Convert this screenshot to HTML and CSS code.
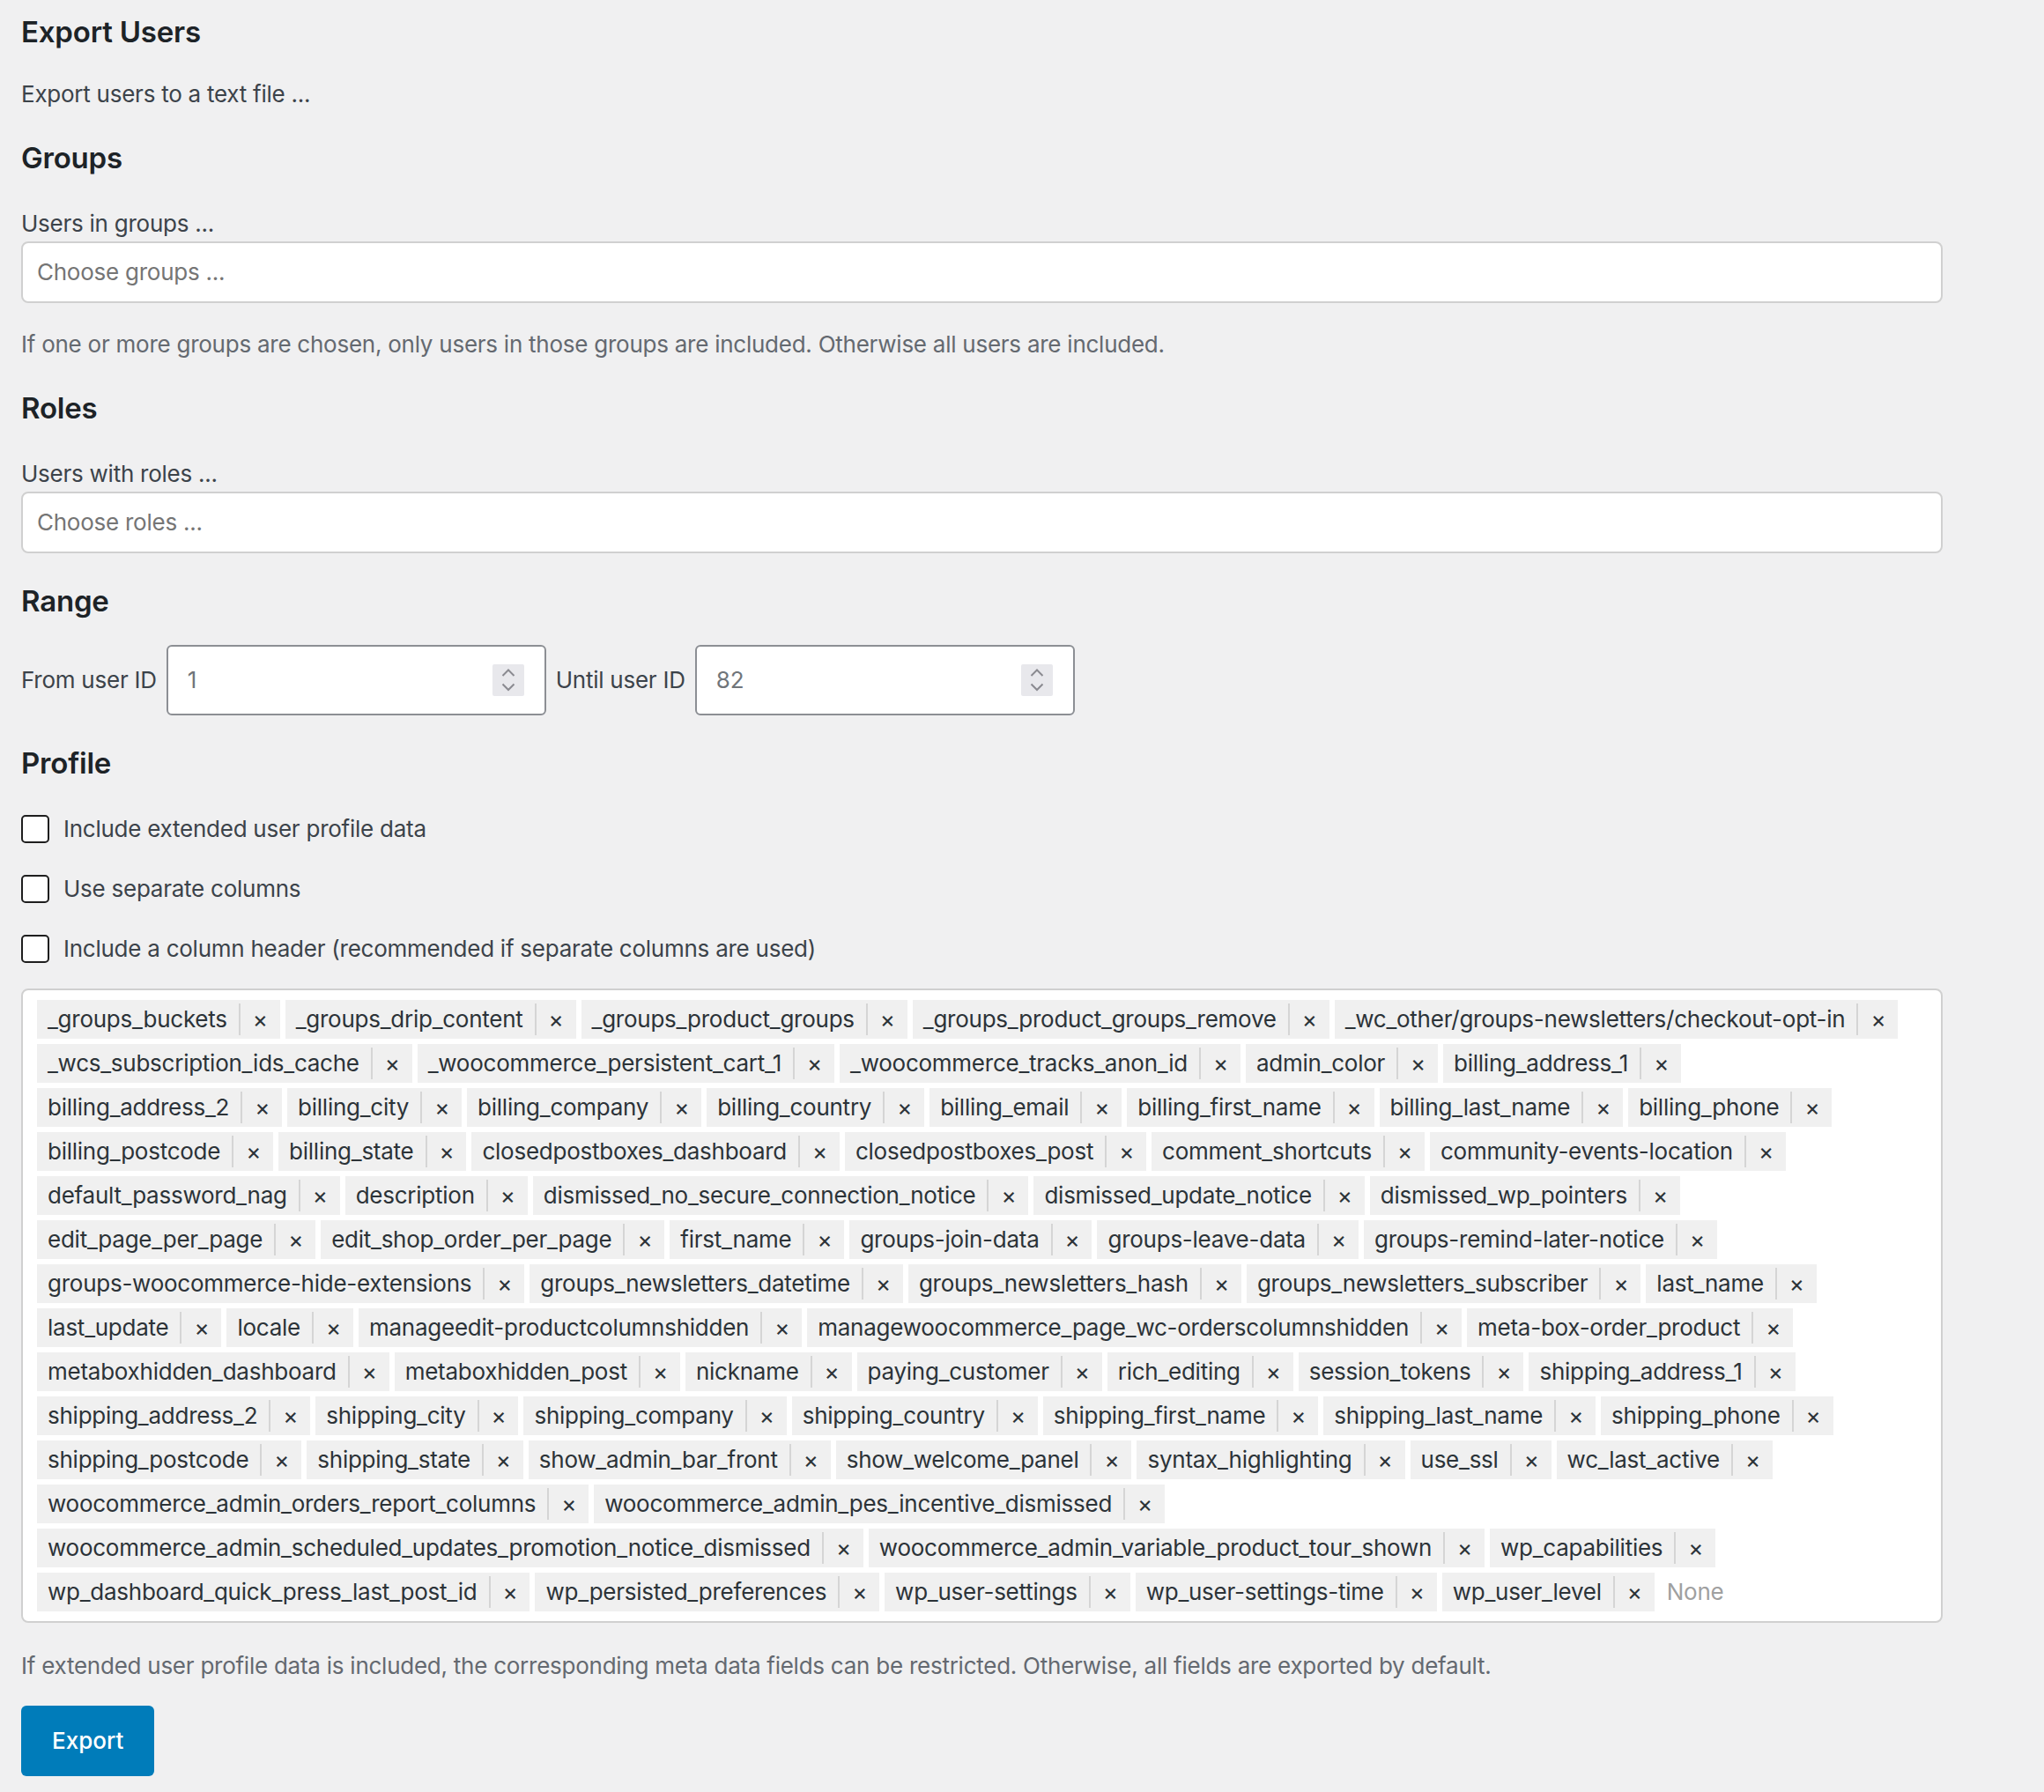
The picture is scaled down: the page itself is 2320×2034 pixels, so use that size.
FILE: index.html
```html
<!DOCTYPE html>
<html>

<head>
  <title>Export Users</title>
  <meta name="viewport" content="width=device-width, initial-scale=1" />
  <link rel="stylesheet" href="styles.css">
</head>

<body>

  <form class="export-users" onsubmit="return false">
    <h2 class="title">Export Users</h2>
    <p class="intro">Export users to a text file ...</p>

    <h3 class="section">Groups</h3>
    <label class="field-label" for="groups">Users in groups ...</label>
    <div class="chooser">
      <input id="groups" type="text" placeholder="Choose groups ...">
    </div>
    <p class="hint">If one or more groups are chosen, only users in those groups are included. Otherwise all users are included.</p>

    <h3 class="section">Roles</h3>
    <label class="field-label" for="roles">Users with roles ...</label>
    <div class="chooser">
      <input id="roles" type="text" placeholder="Choose roles ...">
    </div>

    <h3 class="section">Range</h3>
    <div class="range">
      <label for="fromId">From user ID</label>
      <div class="number">
        <input id="fromId" type="number" min="1" value="1">
        <span class="spinner">
          <svg width="36" height="36" viewBox="0 0 36 36"><path d="M11.5 13L18 6.5L24.5 13M11.5 22.5L18 29L24.5 22.5" fill="none" stroke="#8a8a90" stroke-width="2"/></svg>
        </span>
      </div>
      <label for="untilId">Until user ID</label>
      <div class="number">
        <input id="untilId" type="number" min="1" value="82">
        <span class="spinner">
          <svg width="36" height="36" viewBox="0 0 36 36"><path d="M11.5 13L18 6.5L24.5 13M11.5 22.5L18 29L24.5 22.5" fill="none" stroke="#8a8a90" stroke-width="2"/></svg>
        </span>
      </div>
    </div>

    <h3 class="section">Profile</h3>
    <div class="options">
      <label class="option"><input type="checkbox"> Include extended user profile data</label>
      <label class="option"><input type="checkbox"> Use separate columns</label>
      <label class="option"><input type="checkbox"> Include a column header (recommended if separate columns are used)</label>
    </div>

    <ul class="fields" id="fields">
      <li class="search"><input type="text" placeholder="None"></li>
    </ul>
    <p class="hint hint-fields">If extended user profile data is included, the corresponding meta data fields can be restricted. Otherwise, all fields are exported by default.</p>

    <button class="button" type="submit">Export</button>
  </form>

  <script>
    const fieldNames = [
      '_groups_buckets', '_groups_drip_content', '_groups_product_groups', '_groups_product_groups_remove',
      '_wc_other/groups-newsletters/checkout-opt-in', '_wcs_subscription_ids_cache', '_woocommerce_persistent_cart_1',
      '_woocommerce_tracks_anon_id', 'admin_color', 'billing_address_1', 'billing_address_2', 'billing_city',
      'billing_company', 'billing_country', 'billing_email', 'billing_first_name', 'billing_last_name', 'billing_phone',
      'billing_postcode', 'billing_state', 'closedpostboxes_dashboard', 'closedpostboxes_post', 'comment_shortcuts',
      'community-events-location', 'default_password_nag', 'description', 'dismissed_no_secure_connection_notice',
      'dismissed_update_notice', 'dismissed_wp_pointers', 'edit_page_per_page', 'edit_shop_order_per_page', 'first_name',
      'groups-join-data', 'groups-leave-data', 'groups-remind-later-notice', 'groups-woocommerce-hide-extensions',
      'groups_newsletters_datetime', 'groups_newsletters_hash', 'groups_newsletters_subscriber', 'last_name',
      'last_update', 'locale', 'manageedit-productcolumnshidden', 'managewoocommerce_page_wc-orderscolumnshidden',
      'meta-box-order_product', 'metaboxhidden_dashboard', 'metaboxhidden_post', 'nickname', 'paying_customer',
      'rich_editing', 'session_tokens', 'shipping_address_1', 'shipping_address_2', 'shipping_city', 'shipping_company',
      'shipping_country', 'shipping_first_name', 'shipping_last_name', 'shipping_phone', 'shipping_postcode',
      'shipping_state', 'show_admin_bar_front', 'show_welcome_panel', 'syntax_highlighting', 'use_ssl', 'wc_last_active',
      'woocommerce_admin_orders_report_columns', 'woocommerce_admin_pes_incentive_dismissed',
      'woocommerce_admin_scheduled_updates_promotion_notice_dismissed', 'woocommerce_admin_variable_product_tour_shown',
      'wp_capabilities', 'wp_dashboard_quick_press_last_post_id', 'wp_persisted_preferences', 'wp_user-settings',
      'wp_user-settings-time', 'wp_user_level'
    ];

    const fieldList = document.getElementById('fields');
    const searchItem = fieldList.querySelector('.search');

    fieldNames.forEach(function (name) {
      const tag = document.createElement('li');
      tag.className = 'tag';

      const label = document.createElement('span');
      label.className = 'tag-name';
      label.textContent = name;

      const remove = document.createElement('span');
      remove.className = 'tag-remove';
      remove.textContent = '\u00d7';
      remove.addEventListener('click', function () {
        tag.remove();
      });

      tag.appendChild(label);
      tag.appendChild(remove);
      fieldList.insertBefore(tag, searchItem);
    });
  </script>
</body>

</html>
```

FILE: styles.css
```css
html {
  background-color: #f0f0f1;
}

body {
  margin: 0;
  padding: 0 24px;
  font-family: Inter, "Noto Sans", sans-serif;
  font-size: 26px;
  line-height: 36px;
  letter-spacing: -0.25px;
  color: #3c434a;
}

.export-users {
  max-width: 2181px;
  padding-bottom: 20px;
}

.title,
.section {
  margin: 34px 0 0;
  font-size: 33px;
  line-height: 40px;
  font-weight: 600;
  letter-spacing: -0.2px;
  color: #1d2327;
}

.title {
  margin-top: 16px;
}

.intro {
  margin: 33px 0 0;
}

.field-label {
  display: block;
  margin-top: 37px;
}

/* select-like boxes for groups and roles */
.chooser {
  margin-top: 2px;
  height: 70px;
  box-sizing: border-box;
  padding: 0 16px;
  display: flex;
  align-items: center;
  background-color: #fff;
  border: 2px solid #d0d0d0;
  border-radius: 8px;
}

.chooser input,
.search input {
  width: 100%;
  padding: 0;
  border: 0;
  outline: 0;
  font: inherit;
  letter-spacing: inherit;
  color: #3c434a;
  background: transparent;
}

.chooser input::placeholder {
  color: #757575;
}

.hint {
  margin: 29px 0 0;
  color: #646970;
}

/* Range */
.range {
  margin-top: 30px;
  display: flex;
  align-items: center;
  gap: 11px;
}

.number {
  width: 431px;
  height: 80px;
  box-sizing: border-box;
  padding: 0 23px 0 22px;
  display: flex;
  align-items: center;
  background-color: #fff;
  border: 2px solid #8c8f94;
  border-radius: 6px;
}

.number input {
  flex: 1;
  min-width: 0;
  padding: 0;
  border: 0;
  outline: 0;
  font: inherit;
  color: #70757a;
  background: transparent;
  -moz-appearance: textfield;
}

.number input::-webkit-inner-spin-button,
.number input::-webkit-outer-spin-button {
  -webkit-appearance: none;
  margin: 0;
}

.spinner {
  width: 36px;
  height: 36px;
  background-color: #e8e8ec;
  border-radius: 2px;
}

.spinner svg {
  display: block;
}

/* Profile */
.options {
  margin-top: 37px;
  display: flex;
  flex-direction: column;
  gap: 32px;
}

.option {
  display: flex;
  align-items: center;
  gap: 16px;
}

.option input {
  -webkit-appearance: none;
  appearance: none;
  flex: none;
  margin: 0;
  width: 32px;
  height: 32px;
  background-color: #fff;
  border: 2px solid #1e1e1e;
  border-radius: 5px;
}

.fields {
  margin: 27px 0 0;
  padding: 11px 28px 11px 16px;
  list-style: none;
  display: flex;
  flex-wrap: wrap;
  gap: 6px;
  background-color: #fff;
  border: 2px solid #d0d0d0;
  border-radius: 8px;
}

.tag {
  height: 44px;
  padding-left: 12px;
  display: flex;
  align-items: center;
  background-color: #f0f0f0;
  color: #2c3338;
}

.tag-name {
  padding-right: 13px;
}

.tag-remove {
  align-self: stretch;
  margin: 4px 0;
  padding: 0 14px;
  display: flex;
  align-items: center;
  border-left: 2px solid #d5d5d5;
  cursor: pointer;
}

.search {
  height: 44px;
  margin-left: 8px;
  display: flex;
  align-items: center;
}

.search input {
  width: 120px;
}

.search input::placeholder {
  color: #a0a0a0;
}

.hint-fields {
  margin-top: 31px;
}

.button {
  margin-top: 27px;
  display: block;
  height: 80px;
  padding: 0 35px;
  border: 0;
  border-radius: 6px;
  background-color: #007cba;
  color: #fff;
  font: inherit;
  font-weight: 500;
  cursor: pointer;
}
```
